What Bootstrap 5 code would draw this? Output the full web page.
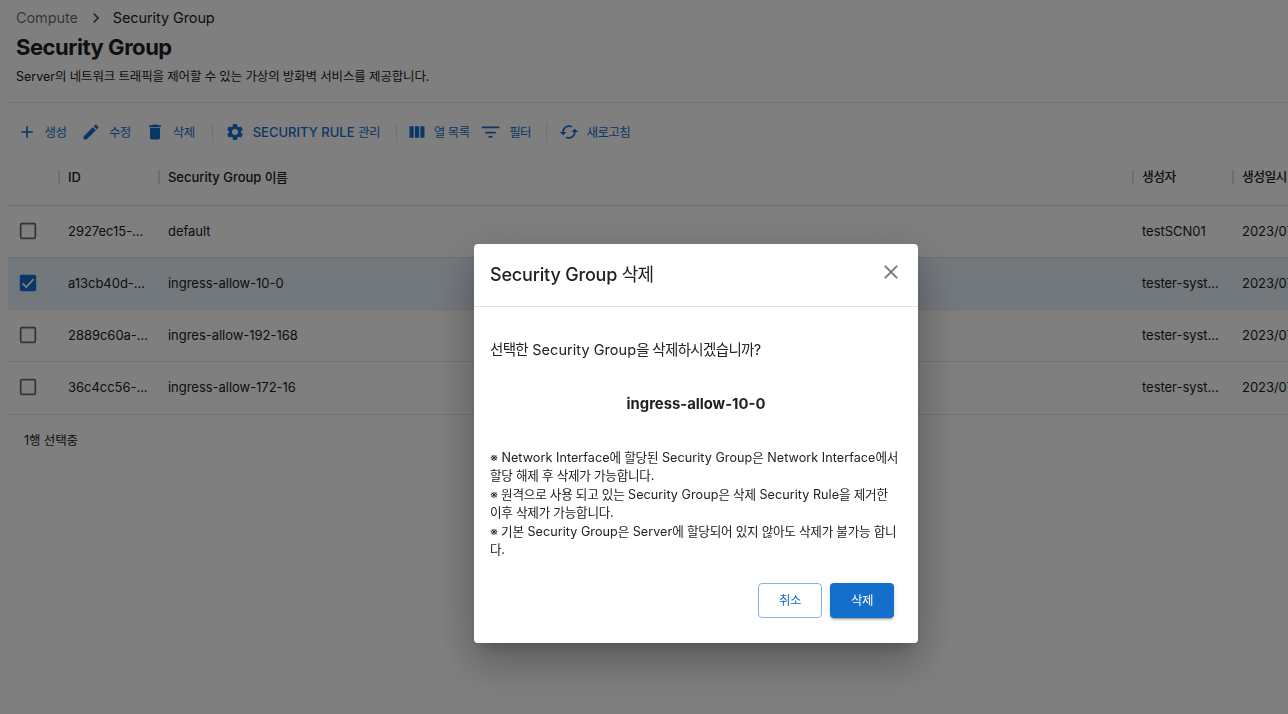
<!DOCTYPE html>
<html lang="ko">
<head>
<meta charset="utf-8">
<title>Security Group</title>
<meta name="viewport" content="width=device-width, initial-scale=1">
<link href="https://cdn.jsdelivr.net/npm/bootstrap@5.3.0/dist/css/bootstrap.min.css" rel="stylesheet">
<style>
  :root { --main: #146ecc; --ink: #212121; --rule: #e0e0e0; }
  body { font-family: Inter, "Noto Sans CJK KR", sans-serif; color: var(--ink); background: #fff; height: 714px; overflow: hidden; font-size: 13px; line-height: 20px; white-space: nowrap; }
  svg { display: block; fill: currentColor; flex: none; }
  .ko { letter-spacing: -.045em; }
  .page { padding-left: 8px; overflow: hidden; }
  .crumbs { font-size: 14.5px; height: 20px; margin-top: 8px; padding-left: 8px; letter-spacing: -.1px; }
  .crumbs .parent { color: rgba(0,0,0,.6); }
  .crumbs svg { color: rgba(0,0,0,.7); margin: 0 7px 0 8px; }
  .page-title { font-size: 22px; font-weight: 700; line-height: 28px; margin: 5px 0 0; padding-left: 8px; letter-spacing: -.46px; }
  .intro { font-size: 12.5px; margin: 6px 0 0; padding-left: 8px; }
  .intro .ko, .grid-foot .ko { letter-spacing: -.012em; }
  .toolbar { border-top: 1px solid var(--rule); margin-top: 15px; height: 48px; padding-top: 12px; color: var(--main); font-weight: 500; }
  .toolbar .ko { font-size: 12.5px; font-weight: 400; }
  .tool > .ko { padding-top: 2px; }
  .tool { border: 0; background: none; padding: 0; color: inherit; font: inherit; letter-spacing: inherit; display: flex; align-items: center; height: 34px; }
  .sep { width: 1px; height: 19px; background: var(--rule); }
  .grid-row { display: grid; grid-template-columns: 50px 100px 974px 100px 180px; height: 52px; align-items: center; border-bottom: 1px solid var(--rule); padding-bottom: 1px; letter-spacing: -.03px; }
  .grid-row > div { padding-left: 10px; }
  .grid-row.heads { height: 56px; font-weight: 500; }
  .heads > div + div { border-left: 2px solid var(--rule); padding-left: 8px; height: 14px; line-height: 14px; }
  .heads .ko { font-size: 12.8px; }
  .grid-row.picked { background: #e7f0f8; }
  .grid-row:last-child { border-bottom: 0; padding-bottom: 2px; }
  .grid-foot { border-top: 1px solid var(--rule); padding: 16px; font-size: 12.5px; }
  .box { color: rgba(0,0,0,.6); }
  .picked .box { color: var(--main); }
  .modal-backdrop { --bs-backdrop-bg: #000; --bs-backdrop-opacity: .5; }
  .modal-dialog { width: 444px; max-width: none; margin: 244px 0 0 474px; }
  .modal-content { border: 0; border-radius: 4px; height: 399px; color: var(--ink); box-shadow: 0 11px 15px -7px rgba(0,0,0,.2), 0 24px 38px 3px rgba(0,0,0,.14), 0 9px 46px 8px rgba(0,0,0,.12); }
  .modal-header { height: 63px; padding: 0 15px 0 16px; border-color: var(--rule); }
  .modal-title { font-size: 18px; font-weight: 500; line-height: 28px; letter-spacing: -.18px; }
  .modal-title .ko { font-weight: 400; }
  .x-btn { border: 0; background: none; padding: 0; color: #757575; margin-bottom: 7px; }
  .modal-body { padding: 33px 16px 0; font-size: 14.5px; }
  .modal-body > div:first-child { letter-spacing: .05px; }
  .target { font-weight: 700; font-size: 14.8px; text-align: center; margin: 34px 0 0; }
  .notes { font-size: 12.6px; line-height: 18.4px; margin-top: 35px; letter-spacing: .05px; }
  .notes .ko { letter-spacing: -.019em; }
  .modal-footer { padding: 0 24px 25px; border: 0; gap: 8px; }
  .modal-footer > * { margin: 0; }
  .act { width: 64px; height: 35px; padding: 2px 0 0; font-size: 12.5px; font-weight: 400; border-radius: 4px; }
  .act-line { color: var(--main); border: 1px solid #86b5e4; background: #fff; }
  .act-fill { color: #fff; background: var(--main); border: 0; box-shadow: 0 3px 1px -2px rgba(0,0,0,.2), 0 2px 2px rgba(0,0,0,.14), 0 1px 5px rgba(0,0,0,.12); }
</style>
</head>
<body>
<main class="page">
  <nav class="crumbs d-flex align-items-center">
    <span class="parent">Compute</span>
    <svg width="20" height="20" viewBox="0 0 24 24"><path d="M10 6 8.590 7.410 13.170 12l-4.580 4.590L10 18l6-6z"/></svg>
    <span>Security Group</span>
  </nav>
  <h1 class="page-title">Security Group</h1>
  <p class="intro">Server<span class="ko">의 네트워크 트래픽을 제어할 수 있는 가상의 방화벽 서비스를 제공합니다.</span></p>

  <div class="toolbar d-flex">
    <button class="tool" style="margin-left:9px"><svg width="20" height="20" viewBox="0 0 24 24"><path d="M19 13h-6v6h-2v-6H5v-2h6V5h2v6h6z"/></svg><span class="ko" style="margin-left:7.5px">생성</span></button>
    <button class="tool" style="margin-left:14.5px"><svg width="20" height="20" viewBox="0 0 24 24"><path d="M3 17.250V21h3.750L17.810 9.940l-3.750-3.750zM20.710 7.040a1 1 0 0 0 0-1.410l-2.340-2.340a1 1 0 0 0-1.410 0l-1.830 1.830 3.750 3.750z"/></svg><span class="ko" style="margin-left:8px">수정</span></button>
    <button class="tool" style="margin-left:14px"><svg width="20" height="20" viewBox="0 0 24 24"><path d="M6 19a2 2 0 0 0 2 2h8a2 2 0 0 0 2-2V7H6zM19 4h-3.500l-1-1h-5l-1 1H5v2h14z"/></svg><span class="ko" style="margin-left:8px">삭제</span></button>
    <i class="sep" style="margin:8px 12px 0 17px"></i>
    <button class="tool"><svg width="20" height="20" viewBox="0 0 24 24"><path d="M19.140 12.940c.04-.3.060-.61.060-.94s-.02-.64-.07-.94l2.030-1.580a.49.49 0 0 0 .12-.61l-1.920-3.320a.488.488 0 0 0-.59-.22l-2.390.96c-.5-.38-1.030-.7-1.620-.94l-.36-2.540a.484.484 0 0 0-.48-.41h-3.840c-.24 0-.43.17-.47.41l-.36 2.540c-.59.24-1.130.57-1.620.94l-2.390-.96a.48.48 0 0 0-.59.22L2.740 8.870a.48.48 0 0 0 .12.610l2.030 1.580c-.05.3-.09.63-.09.94s.02.64.07.94l-2.030 1.580a.49.49 0 0 0-.12.610l1.920 3.320c.12.22.37.29.59.22l2.390-.96c.5.380 1.030.7 1.620.94l.36 2.540c.05.24.24.41.48.41h3.840c.24 0 .44-.17.47-.41l.36-2.540c.59-.24 1.130-.56 1.620-.94l2.390.96c.22.080.47 0 .59-.22l1.920-3.320a.48.48 0 0 0-.12-.610zM12 15.600A3.600 3.600 0 1 1 12 8.400a3.600 3.600 0 0 1 0 7.200z"/></svg><span style="margin-left:8px">SECURITY RULE <span class="ko">관리</span></span></button>
    <i class="sep" style="margin:8px 10px 0 16px"></i>
    <button class="tool"><svg width="20" height="20" viewBox="0 0 24 24"><path d="M3 5h5v14H3zm6.500 0h5v14h-5zM16 5h5v14h-5z"/></svg><span class="ko" style="margin-left:7px">열 목록</span></button>
    <button class="tool" style="margin-left:10px"><svg width="21" height="21" viewBox="0 0 24 24"><path d="M10 18h4v-2h-4zM2 5v2h20V5zm4 8h12v-2H6z"/></svg><span class="ko" style="margin-left:8.5px">필터</span></button>
    <i class="sep" style="margin:8px 12px 0 14.500px"></i>
    <button class="tool"><svg width="20" height="20" viewBox="0 0 24 24"><path d="m19 8-4 4h3c0 3.310-2.690 6-6 6-1.010 0-1.970-.25-2.800-.7l-1.460 1.460A7.930 7.930 0 0 0 12 20c4.420 0 8-3.580 8-8h3zM6 12c0-3.310 2.690-6 6-6 1.010 0 1.970.25 2.800.7l1.460-1.460A7.930 7.930 0 0 0 12 4c-4.420 0-8 3.580-8 8H1l4 4 4-4z"/></svg><span class="ko" style="margin-left:8px">새로고침</span></button>
  </div>

  <section>
    <div class="grid-row heads"><div></div><div>ID</div><div>Security Group <span class="ko">이름</span></div><div class="ko">생성자</div><div class="ko">생성일시</div></div>
    <div class="grid-row"><div><svg class="box" width="20" height="20" viewBox="0 0 20 20"><rect x="2.700" y="2.700" width="14.600" height="14.600" rx="1" fill="none" stroke="currentColor" stroke-width="1.700"/></svg></div><div>2927ec15-...</div><div>default</div><div>testSCN01</div><div>2023/07/11 10:22:31</div></div>
    <div class="grid-row picked"><div><svg class="box" width="20" height="20" viewBox="0 0 20 20"><rect x="1.800" y="1.800" width="16.400" height="16.400" rx="1.700"/><path d="m4.500 10.300 3.700 3.700 7.400-7.800" fill="none" stroke="#fff" stroke-width="1.700"/></svg></div><div>a13cb40d-...</div><div>ingress-allow-10-0</div><div>tester-syst...</div><div>2023/07/11 10:22:31</div></div>
    <div class="grid-row"><div><svg class="box" width="20" height="20" viewBox="0 0 20 20"><rect x="2.700" y="2.700" width="14.600" height="14.600" rx="1" fill="none" stroke="currentColor" stroke-width="1.700"/></svg></div><div>2889c60a-...</div><div>ingres-allow-192-168</div><div>tester-syst...</div><div>2023/07/11 10:22:31</div></div>
    <div class="grid-row"><div><svg class="box" width="20" height="20" viewBox="0 0 20 20"><rect x="2.700" y="2.700" width="14.600" height="14.600" rx="1" fill="none" stroke="currentColor" stroke-width="1.700"/></svg></div><div>36c4cc56-...</div><div>ingress-allow-172-16</div><div>tester-syst...</div><div>2023/07/11 10:22:31</div></div>
  </section>
  <div class="grid-foot">1<span class="ko">행 선택중</span></div>
</main>

<div class="modal-backdrop show"></div>
<div class="modal d-block overflow-hidden" tabindex="-1" role="dialog" aria-modal="true">
  <div class="modal-dialog">
    <div class="modal-content">
      <div class="modal-header">
        <h2 class="modal-title">Security Group <span class="ko">삭제</span></h2>
        <button class="x-btn" aria-label="닫기"><svg width="24" height="24" viewBox="0 0 24 24" fill="none" stroke="currentColor" stroke-width="1.800"><path d="m5.800 5.800 12.400 12.400M18.200 5.800 5.800 18.200"/></svg></button>
      </div>
      <div class="modal-body">
        <div><span class="ko">선택한</span> Security Group<span class="ko">을 삭제하시겠습니까?</span></div>
        <p class="target">ingress-allow-10-0</p>
        <div class="notes">
          <div><span class="ko">※</span> Network Interface<span class="ko">에 할당된</span> Security Group<span class="ko">은</span> Network Interface<span class="ko">에서<br>할당 해제 후 삭제가 가능합니다.</span></div>
          <div><span class="ko">※ 원격으로 사용 되고 있는</span> Security Group<span class="ko">은 삭제</span> Security Rule<span class="ko">을 제거한<br>이후 삭제가 가능합니다.</span></div>
          <div><span class="ko">※ 기본</span> Security Group<span class="ko">은</span> Server<span class="ko">에 할당되어 있지 않아도 삭제가 불가능 합니<br>다.</span></div>
        </div>
      </div>
      <div class="modal-footer">
        <button class="btn act act-line ko">취소</button>
        <button class="btn act act-fill ko">삭제</button>
      </div>
    </div>
  </div>
</div>
<script src="https://cdn.jsdelivr.net/npm/bootstrap@5.3.0/dist/js/bootstrap.bundle.min.js"></script>
</body>
</html>
